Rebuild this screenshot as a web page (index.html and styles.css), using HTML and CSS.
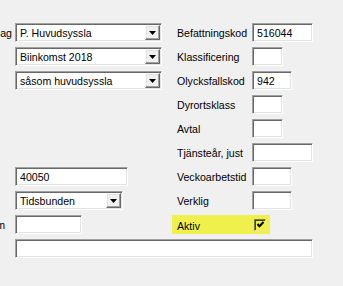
FILE: index.html
```html
<!DOCTYPE html>
<html lang="sv">
<head>
<meta charset="utf-8">
<title>Anställning</title>
<link rel="stylesheet" href="styles.css">
</head>
<body>
<div class="form">
  <div class="cols">
    <div class="col-left">
      <div class="row">
        <div class="lbl-left lbl-ag">ag</div>
        <div class="select w147"><span class="select-text">P. Huvudsyssla</span><span class="select-btn"><svg width="7" height="4" viewBox="0 0 7 4"><polygon points="0,0 7,0 3.5,4" fill="#000"/></svg></span></div>
      </div>
      <div class="row">
        <div class="lbl-left"></div>
        <div class="select w147"><span class="select-text">Biinkomst 2018</span><span class="select-btn"><svg width="7" height="4" viewBox="0 0 7 4"><polygon points="0,0 7,0 3.5,4" fill="#000"/></svg></span></div>
      </div>
      <div class="row">
        <div class="lbl-left"></div>
        <div class="select w147"><span class="select-text">såsom huvudsyssla</span><span class="select-btn"><svg width="7" height="4" viewBox="0 0 7 4"><polygon points="0,0 7,0 3.5,4" fill="#000"/></svg></span></div>
      </div>
      <div class="row"></div>
      <div class="row"></div>
      <div class="row"></div>
      <div class="row">
        <div class="lbl-left"></div>
        <div class="field w113">40050</div>
      </div>
      <div class="row">
        <div class="lbl-left"></div>
        <div class="select w108"><span class="select-text">Tidsbunden</span><span class="select-btn"><svg width="7" height="4" viewBox="0 0 7 4"><polygon points="0,0 7,0 3.5,4" fill="#000"/></svg></span></div>
      </div>
      <div class="row">
        <div class="lbl-left lbl-m">m</div>
        <div class="field w67"></div>
      </div>
    </div>
    <div class="col-right">
      <div class="row"><div class="lbl">Befattningskod</div><div class="field w61">516044</div></div>
      <div class="row"><div class="lbl">Klassificering</div><div class="field w31"></div></div>
      <div class="row"><div class="lbl">Olycksfallskod</div><div class="field w40">942</div></div>
      <div class="row"><div class="lbl">Dyrortsklass</div><div class="field w31"></div></div>
      <div class="row"><div class="lbl">Avtal</div><div class="field w31"></div></div>
      <div class="row"><div class="lbl">Tjänsteår, just</div><div class="field w61"></div></div>
      <div class="row"><div class="lbl">Veckoarbetstid</div><div class="field w40"></div></div>
      <div class="row"><div class="lbl">Verklig</div><div class="field w40"></div></div>
      <div class="row">
        <div class="aktiv">
          <div class="lbl">Aktiv</div>
          <span class="check"><svg width="9" height="9" viewBox="0 0 9 9"><path d="M1.5 4 L3.5 6.2 L7.5 2" fill="none" stroke="#000" stroke-width="2"/></svg></span>
        </div>
      </div>
    </div>
  </div>
  <div class="row wide-row">
    <div class="field w298"></div>
  </div>
</div>
</body>
</html>
```
FILE: styles.css
```css
html, body {
  margin: 0;
  padding: 0;
}
body {
  background: #f0f0f0;
  font-family: "Liberation Sans", Arial, sans-serif;
  font-size: 10.6px;
  color: #000;
  width: 343px;
  height: 286px;
  overflow: hidden;
}
.form {
  padding-top: 23px;
  display: flex;
  flex-direction: column;
  gap: 5px;
}
.cols {
  display: flex;
}
.col-left {
  width: 172px;
  display: flex;
  flex-direction: column;
  gap: 5px;
}
.col-right {
  flex: 1;
  display: flex;
  flex-direction: column;
  gap: 5px;
}
.row {
  height: 19px;
  display: flex;
  align-items: center;
}
.lbl-left {
  width: 15px;
  flex: none;
  display: flex;
  justify-content: flex-end;
  overflow: hidden;
  white-space: nowrap;
}
.lbl-ag { padding-right: 3px; box-sizing: border-box; }
.lbl-m { padding-right: 10px; box-sizing: border-box; }
.lbl {
  width: 80px;
  flex: none;
  box-sizing: border-box;
  padding-left: 5px;
  white-space: nowrap;
}
.field {
  box-sizing: border-box;
  height: 19px;
  background: #fff;
  border: 1px solid;
  border-color: #a0a0a0 #ffffff #ffffff #a0a0a0;
  box-shadow: inset 1px 1px 0 #696969, inset -1px -1px 0 #e3e3e3;
  padding: 1px 3px 0 4px;
  display: flex;
  align-items: center;
  white-space: nowrap;
  flex: none;
}
.select {
  box-sizing: border-box;
  height: 19px;
  background: #fff;
  border: 1px solid;
  border-color: #a0a0a0 #ffffff #ffffff #a0a0a0;
  box-shadow: inset 1px 1px 0 #696969, inset -1px -1px 0 #e3e3e3;
  padding: 1px;
  display: flex;
  align-items: center;
  flex: none;
}
.select-text {
  flex: 1;
  padding-left: 3px;
  padding-top: 1px;
  white-space: nowrap;
  overflow: hidden;
}
.select-btn {
  box-sizing: border-box;
  width: 15px;
  height: 15px;
  background: #f0f0f0;
  border: 1px solid;
  border-color: #ffffff #696969 #696969 #ffffff;
  box-shadow: inset -1px -1px 0 #a0a0a0, inset 1px 1px 0 #e3e3e3;
  display: flex;
  align-items: center;
  justify-content: center;
  padding-top: 1px;
}
.select-btn svg { display: block; }
.w31 { width: 31px; }
.w40 { width: 40px; }
.w61 { width: 61px; }
.w67 { width: 67px; }
.w108 { width: 108px; }
.w113 { width: 113px; }
.w147 { width: 147px; }
.w298 { width: 298px; }
.wide-row {
  padding-left: 15px;
}
.aktiv {
  width: 98px;
  height: 19px;
  background: #eff04b;
  display: flex;
  align-items: center;
}
.aktiv .lbl {
  width: 82px;
  padding-top: 2px;
}
.check {
  box-sizing: border-box;
  width: 12px;
  height: 12px;
  border: 1px solid;
  border-color: #7a7a3a #e8e8a0 #e8e8a0 #7a7a3a;
  box-shadow: inset 1px 1px 0 #404020;
  background: #eff04b;
  display: flex;
  align-items: center;
  justify-content: center;
}
.check svg { display: block; }
```
